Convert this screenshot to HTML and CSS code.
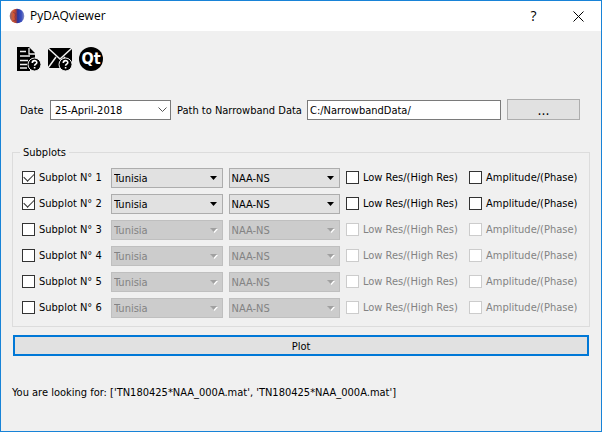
FILE: index.html
```html
<!DOCTYPE html>
<html lang="en">
<head>
<meta charset="utf-8">
<title>PyDAQviewer</title>
<link rel="stylesheet" href="styles.css">
</head>
<body>
<svg class="defs" aria-hidden="true">
  <symbol id="arrow" viewBox="0 0 7 4"><path d="M0 0h7L3.500 4z"/></symbol>
</svg>
<div class="window">
  <header class="titlebar">
    <svg class="app-icon" viewBox="0 0 16 16" aria-hidden="true">
      <defs><linearGradient id="globe"><stop offset="0" stop-color="#8a6a78"/><stop offset=".25" stop-color="#d85a30"/><stop offset=".42" stop-color="#a83c38"/><stop offset=".55" stop-color="#29369c"/><stop offset=".8" stop-color="#3c50c0"/><stop offset="1" stop-color="#8a90c0"/></linearGradient></defs>
      <circle cx="8" cy="8" r="7.300" fill="url(#globe)"/>
      <path d="M4 4l3 2-1 3 1 3-3 1" fill="none" stroke="#6a3450" opacity=".6"/>
    </svg>
    <h1 class="title">PyDAQviewer</h1>
    <button class="caption" type="button" aria-label="Help">?</button>
    <button class="caption" type="button" aria-label="Close"><svg class="close" viewBox="0 0 11 11"><path d="M.5 .5l10 10M10.500 .5l-10 10"/></svg></button>
  </header>
  <main class="content">
    <nav class="toolbar">
      <button class="tool" type="button" aria-label="Documentation"><svg viewBox="0 0 24 24">
        <path d="M0 0h12l6 6v7H0zM0 12h13v12H0z"/>
        <path d="M12 1v6h6" fill="none" stroke="#f0f0f0" stroke-width="1.300"/>
        <path d="M3 4.500h6M3 9h10M3 13.500h8M3 17.500h7M3 21h7" stroke="#f0f0f0" stroke-width="1.600"/>
        <circle cx="17.500" cy="17.500" r="6.500" stroke="#f0f0f0"/>
        <path d="M15.300 16c0-3.200 4.500-3 4.500-.5 0 1.700-2.200 1.600-2.200 3.300M17.600 20v1.600" fill="none" stroke="#fff" stroke-width="1.600"/>
      </svg></button>
      <button class="tool" type="button" aria-label="Contact"><svg viewBox="0 0 24 24">
        <path d="M0 1h24v20H0z"/>
        <path d="M0 1l12 11L24 1M0 21l8-11M24 21l-8-11" fill="none" stroke="#f0f0f0" stroke-width="1.500"/>
        <circle cx="17.500" cy="17.500" r="6.500" stroke="#f0f0f0"/>
        <path d="M15.300 16c0-3.200 4.500-3 4.500-.5 0 1.700-2.200 1.600-2.200 3.300M17.600 20v1.600" fill="none" stroke="#fff" stroke-width="1.600"/>
      </svg></button>
      <button class="tool" type="button" aria-label="About Qt"><svg viewBox="0 0 24 24">
        <circle cx="12" cy="12" r="12"/>
        <text class="qt" x="12" y="17" text-anchor="middle">Qt</text>
      </svg></button>
    </nav>
    <div class="form">
      <label for="date">Date</label>
      <div class="combo date"><select id="date"><option>25-April-2018</option></select><svg class="chevron" viewBox="0 0 9 6"><path d="M.5 .5l4 4 4-4"/></svg></div>
      <label for="path">Path to Narrowband Data</label>
      <input class="path" id="path" type="text" value="C:/NarrowbandData/">
      <button class="push browse" type="button" aria-label="Browse">...</button>
    </div>
    <fieldset class="subplots">
      <legend>Subplots</legend>
      <div class="row">
        <label class="check"><input type="checkbox" checked>Subplot N° 1</label>
        <div class="combo"><select aria-label="Site 1"><option>Tunisia</option></select><svg class="arrow"><use href="#arrow"/></svg></div>
        <div class="combo"><select aria-label="Signal 1"><option>NAA-NS</option></select><svg class="arrow"><use href="#arrow"/></svg></div>
        <label class="check"><input type="checkbox">Low Res/(High Res)</label>
        <label class="check"><input type="checkbox">Amplitude/(Phase)</label>
      </div>
      <div class="row">
        <label class="check"><input type="checkbox" checked>Subplot N° 2</label>
        <div class="combo"><select aria-label="Site 2"><option>Tunisia</option></select><svg class="arrow"><use href="#arrow"/></svg></div>
        <div class="combo"><select aria-label="Signal 2"><option>NAA-NS</option></select><svg class="arrow"><use href="#arrow"/></svg></div>
        <label class="check"><input type="checkbox">Low Res/(High Res)</label>
        <label class="check"><input type="checkbox">Amplitude/(Phase)</label>
      </div>
      <div class="row">
        <label class="check"><input type="checkbox">Subplot N° 3</label>
        <div class="combo"><select aria-label="Site 3" disabled><option>Tunisia</option></select><svg class="arrow"><use href="#arrow"/></svg></div>
        <div class="combo"><select aria-label="Signal 3" disabled><option>NAA-NS</option></select><svg class="arrow"><use href="#arrow"/></svg></div>
        <label class="check off"><input type="checkbox" disabled>Low Res/(High Res)</label>
        <label class="check off"><input type="checkbox" disabled>Amplitude/(Phase)</label>
      </div>
      <div class="row">
        <label class="check"><input type="checkbox">Subplot N° 4</label>
        <div class="combo"><select aria-label="Site 4" disabled><option>Tunisia</option></select><svg class="arrow"><use href="#arrow"/></svg></div>
        <div class="combo"><select aria-label="Signal 4" disabled><option>NAA-NS</option></select><svg class="arrow"><use href="#arrow"/></svg></div>
        <label class="check off"><input type="checkbox" disabled>Low Res/(High Res)</label>
        <label class="check off"><input type="checkbox" disabled>Amplitude/(Phase)</label>
      </div>
      <div class="row">
        <label class="check"><input type="checkbox">Subplot N° 5</label>
        <div class="combo"><select aria-label="Site 5" disabled><option>Tunisia</option></select><svg class="arrow"><use href="#arrow"/></svg></div>
        <div class="combo"><select aria-label="Signal 5" disabled><option>NAA-NS</option></select><svg class="arrow"><use href="#arrow"/></svg></div>
        <label class="check off"><input type="checkbox" disabled>Low Res/(High Res)</label>
        <label class="check off"><input type="checkbox" disabled>Amplitude/(Phase)</label>
      </div>
      <div class="row">
        <label class="check"><input type="checkbox">Subplot N° 6</label>
        <div class="combo"><select aria-label="Site 6" disabled><option>Tunisia</option></select><svg class="arrow"><use href="#arrow"/></svg></div>
        <div class="combo"><select aria-label="Signal 6" disabled><option>NAA-NS</option></select><svg class="arrow"><use href="#arrow"/></svg></div>
        <label class="check off"><input type="checkbox" disabled>Low Res/(High Res)</label>
        <label class="check off"><input type="checkbox" disabled>Amplitude/(Phase)</label>
      </div>
    </fieldset>
    <button class="push plot" type="button">Plot</button>
    <p class="status">You are looking for: ['TN180425*NAA_000A.mat', 'TN180425*NAA_000A.mat']</p>
  </main>
</div>
</body>
</html>
```
FILE: styles.css
```css
* { box-sizing: border-box; }
body {
  margin: 0;
  font: 11px/16px "DejaVu Sans Condensed", sans-serif;
  color: #000;
}
button, input, select { font: inherit; color: inherit; margin: 0; }
svg { display: block; }
.defs { position: absolute; width: 0; height: 0; }
.window {
  min-height: 100vh;
  background: #f0f0f0;
  border: 1px solid #1883d7;
}
.titlebar {
  display: flex;
  align-items: center;
  height: 30px;
  padding-left: 8px;
  background: #fff;
}
.app-icon { width: 16px; height: 16px; }
.title {
  flex: 1;
  margin: 0 0 0 5px;
  font: 12px/16px "Open Sans", sans-serif;
}
.caption {
  display: grid;
  place-items: center;
  width: 45px;
  height: 30px;
  padding: 0;
  border: 0;
  background: none;
  font: 14px/16px "Open Sans", sans-serif;
}
.close { width: 11px; height: 11px; fill: none; stroke: #000; }
.content { padding: 16px 11px; }
.toolbar { display: flex; gap: 7px; padding-left: 5px; }
.tool { padding: 0; border: 0; background: none; }
.tool svg { width: 24px; height: 24px; }
.qt { font: bold 16px "Liberation Sans Narrow", "DejaVu Sans Condensed", sans-serif; fill: #fff; }
.form {
  display: grid;
  grid-template-columns: 24px 121px 124px 1fr 73px;
  align-items: center;
  gap: 6px;
  margin: 28px 10px 0 8px;
}
.form label { padding-top: 2px; white-space: nowrap; }
.combo { display: grid; align-items: center; min-width: 0; }
.combo > * { grid-area: 1 / 1; }
.combo select {
  appearance: none;
  width: 100%;
  height: 20px;
  padding: 2px 2px 0;
  border: 1px solid #adadad;
  border-radius: 0;
  background: #e1e1e1;
}
.combo select:disabled {
  color: #838383;
  opacity: 1;
  background: #ccc;
  border-color: #bfbfbf;
}
.combo.date select {
  padding: 2px 4px 0;
  background: #fff;
  border-color: #7a7a7a;
}
.chevron {
  justify-self: end;
  width: 9px;
  height: 6px;
  margin-right: 4px;
  fill: none;
  stroke: #555;
  pointer-events: none;
}
.arrow {
  justify-self: end;
  width: 7px;
  height: 4px;
  margin-right: 6px;
  pointer-events: none;
}
select:disabled + .arrow {
  fill: #a0a0a0;
  filter: drop-shadow(1px 1px 0 #fff);
}
.path {
  width: 100%;
  height: 20px;
  padding: 2px 2px 0;
  border: 1px solid #7a7a7a;
  background: #fff;
}
.push {
  height: 21px;
  padding: 2px 0 0;
  border: 1px solid #adadad;
  background: #e1e1e1;
}
.browse { font-size: 14px; padding: 0; }
.subplots {
  display: grid;
  gap: 6px;
  min-width: 0;
  margin: 24px 0 0;
  padding: 8px 9px;
  border: 1px solid #dcdcdc;
}
.subplots legend { height: 16px; padding: 1px 3px 0; margin-left: -2px; }
.row {
  display: grid;
  grid-template-columns: 83px 1fr 1fr 117px 111px;
  align-items: start;
  gap: 6px;
}
.check {
  display: flex;
  align-items: center;
  gap: 4px;
  height: 19px;
  line-height: 19px;
  white-space: nowrap;
}
.check input {
  appearance: none;
  display: grid;
  place-items: center;
  flex: none;
  width: 13px;
  height: 13px;
  border: 1px solid #333;
  background: #fff;
}
.check input:checked::before {
  content: "";
  width: 9px;
  height: 5px;
  margin-bottom: 3px;
  border: solid #333;
  border-width: 0 0 1px 1px;
  transform: rotate(-45deg);
}
.off { color: #838383; }
.check input:disabled { border-color: #ccc; }
.plot {
  display: block;
  width: calc(100% - 2px);
  margin: 8px 1px 0;
  border: 2px solid #0078d7;
}
.status { margin: 29px 0 0; }
```
